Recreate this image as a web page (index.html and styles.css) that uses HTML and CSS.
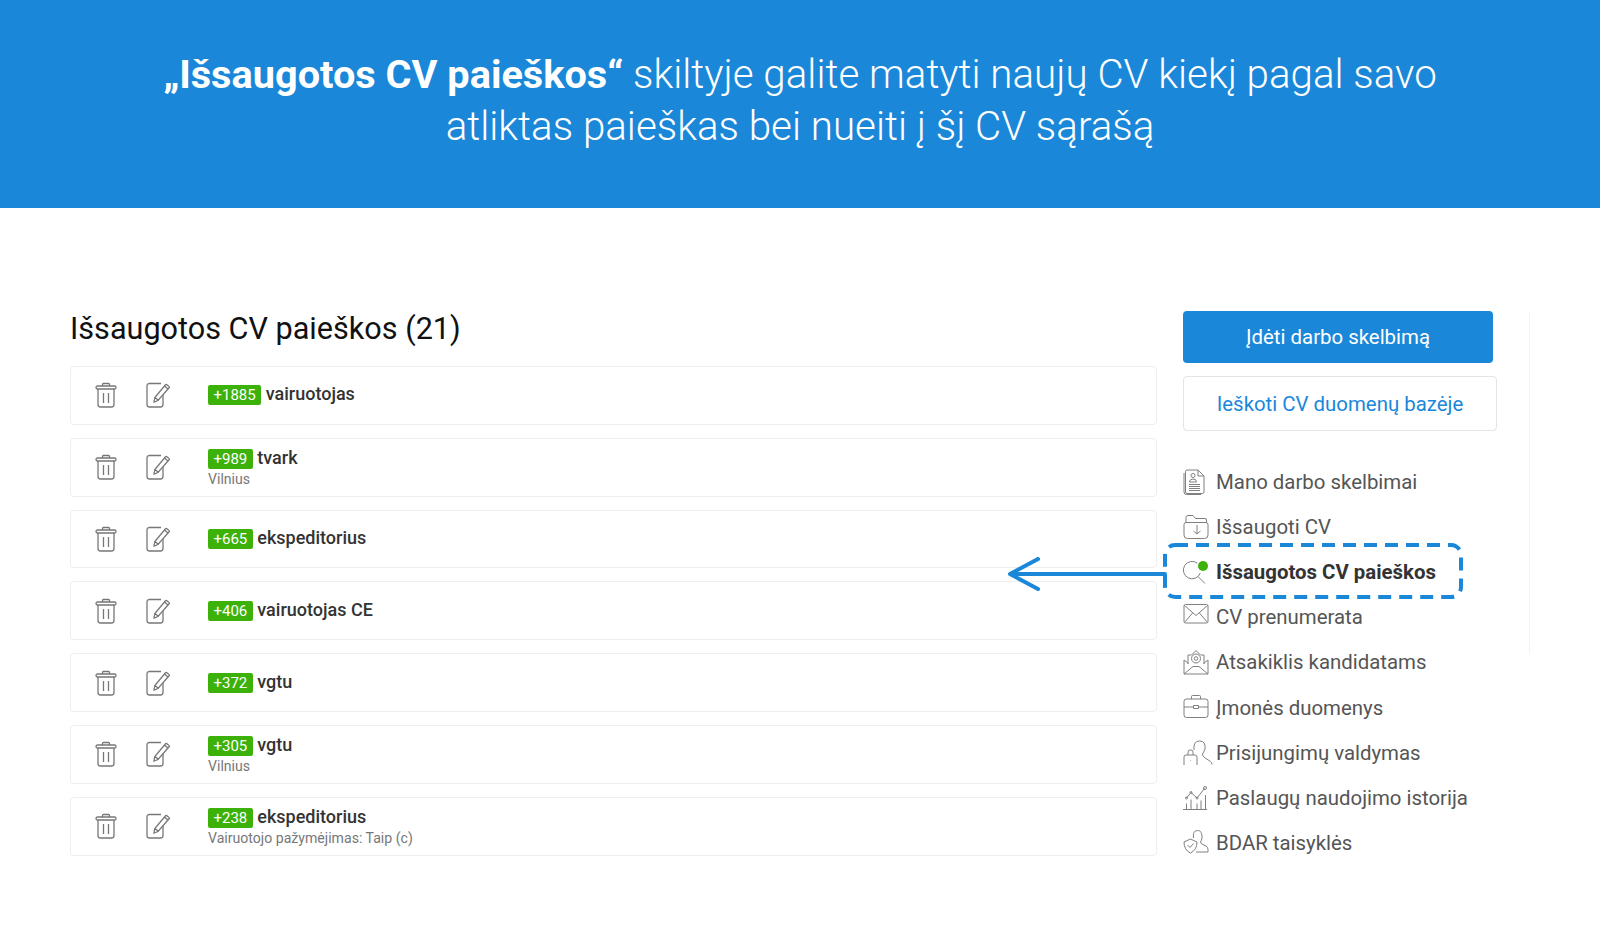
FILE: index.html
```html
<!DOCTYPE html>
<html lang="lt">

<head>
    <meta charset="UTF-8">
    <title>Išsaugotos CV paieškos</title>
    <link rel="stylesheet" href="styles.css">
</head>

<body>
    <svg class="icon-defs" width="0" height="0">
        <symbol id="i-trash" viewBox="0 0 22 26">
            <rect x="1" y="4" width="20" height="3" rx="1.500" />
            <path d="M7.500 4V2.500q0-1 1-1h5q1 0 1 1V4M3 7v15.500Q3 25 5.500 25h11q2.500 0 2.500-2.500V7M8.500 11v10M13.500 11v10" />
        </symbol>
        <symbol id="i-edit" viewBox="0 0 24 26">
            <path d="M15 1.500H3.500Q1 1.500 1 4v18.500Q1 25 3.500 25h11q2.500 0 2.500-2.500V13" />
            <path d="M8 20l.8-4.500L18.500 4l3.500 3L12 18.500zM9 15.500l3.500 3M18.500 4l1-1.200q.7-.7 1.500 0l2 1.800q.7.7 0 1.500L22 7" />
        </symbol>
    </svg>

    <header class="banner">
        <p class="banner-text"><b>„Išsaugotos CV paieškos“</b> skiltyje galite matyti naujų CV kiekį pagal savo<br>atliktas paieškas bei nueiti į šį CV sąrašą</p>
    </header>

    <main class="page">
        <section class="searches">
            <h1 class="searches-title">Išsaugotos CV paieškos (21)</h1>
            <div class="search-list">
                <div class="search-row">
                    <svg class="row-icon"><use href="#i-trash" /></svg>
                    <svg class="row-icon row-icon-edit"><use href="#i-edit" /></svg>
                    <div class="search-info">
                        <div class="search-name"><span class="count">+1885</span> vairuotojas</div>
                    </div>
                </div>
                <div class="search-row">
                    <svg class="row-icon"><use href="#i-trash" /></svg>
                    <svg class="row-icon row-icon-edit"><use href="#i-edit" /></svg>
                    <div class="search-info">
                        <div class="search-name"><span class="count">+989</span> tvark</div>
                        <div class="search-note">Vilnius</div>
                    </div>
                </div>
                <div class="search-row">
                    <svg class="row-icon"><use href="#i-trash" /></svg>
                    <svg class="row-icon row-icon-edit"><use href="#i-edit" /></svg>
                    <div class="search-info">
                        <div class="search-name"><span class="count">+665</span> ekspeditorius</div>
                    </div>
                </div>
                <div class="search-row">
                    <svg class="row-icon"><use href="#i-trash" /></svg>
                    <svg class="row-icon row-icon-edit"><use href="#i-edit" /></svg>
                    <div class="search-info">
                        <div class="search-name"><span class="count">+406</span> vairuotojas CE</div>
                    </div>
                </div>
                <div class="search-row">
                    <svg class="row-icon"><use href="#i-trash" /></svg>
                    <svg class="row-icon row-icon-edit"><use href="#i-edit" /></svg>
                    <div class="search-info">
                        <div class="search-name"><span class="count">+372</span> vgtu</div>
                    </div>
                </div>
                <div class="search-row">
                    <svg class="row-icon"><use href="#i-trash" /></svg>
                    <svg class="row-icon row-icon-edit"><use href="#i-edit" /></svg>
                    <div class="search-info">
                        <div class="search-name"><span class="count">+305</span> vgtu</div>
                        <div class="search-note">Vilnius</div>
                    </div>
                </div>
                <div class="search-row">
                    <svg class="row-icon"><use href="#i-trash" /></svg>
                    <svg class="row-icon row-icon-edit"><use href="#i-edit" /></svg>
                    <div class="search-info">
                        <div class="search-name"><span class="count">+238</span> ekspeditorius</div>
                        <div class="search-note">Vairuotojo pažymėjimas: Taip (c)</div>
                    </div>
                </div>
            </div>
        </section>

        <aside class="sidebar">
            <a class="btn btn-primary">Įdėti darbo skelbimą</a>
            <a class="btn btn-outline">Ieškoti CV duomenų bazėje</a>
            <nav class="side-menu">
                <a class="side-item">
                    <svg class="side-icon" viewBox="0 0 26 26"><path d="M4 1h11l6 6v16q0 1.500-1.500 1.500H4q-1.500 0-1.500-1.500V2.500Q2.500 1 4 1zM15 1v6h6M1 4v19q0 2.500 2.500 2.500H18" /><circle cx="10" cy="6.500" r="2" /><path d="M6.500 13q0-3 3.500-3t3.500 3zM6 15.500h11M6 17.500h11M6 19.500h11M6 21.500h11" /></svg>
                    Mano darbo skelbimai
                </a>
                <a class="side-item">
                    <svg class="side-icon" viewBox="0 0 26 26"><path d="M3 8.500V3.500q0-2 2-2h5l2.500 3H22q1.500 0 1.500 1.500v2.500" /><path d="M3 8.500h20q2 0 2 2V21q0 3.500-3.500 3.500h-17Q1 24.500 1 21V10.500q0-2 2-2z" /><path d="M14 11v9M10.500 17l3.500 3 3.500-3" /></svg>
                    Išsaugoti CV
                </a>
                <a class="side-item side-item-active">
                    <svg class="side-icon" viewBox="0 0 26 26"><path d="M14.500 4.300a8.700 8.700 0 1 0 2.800 9.700M15 17.500l7 7" /><circle class="side-dot" cx="20" cy="7" r="5" /></svg>
                    Išsaugotos CV paieškos
                </a>
                <a class="side-item">
                    <svg class="side-icon" viewBox="0 0 26 26"><rect x="1" y=".5" width="24" height="18.500" rx="1.500" /><path d="M1.500 1.500L13 11.500 24.500 1.500M1.500 18.500l8-9.500M24.500 18.500l-8-9.500" /></svg>
                    CV prenumerata
                </a>
                <a class="side-item">
                    <svg class="side-icon" viewBox="0 0 26 26"><path d="M1 11v14h24V11M1 25l9-7.500h6l9 7.500M1 11l4.500 3.500M25 11l-4.500 3.500M5 15V6h3.500L13 1.500 17.500 6H21v9" /><circle cx="13" cy="9.500" r="4.500" /><circle cx="13" cy="9.500" r="1.800" /></svg>
                    Atsakiklis kandidatams
                </a>
                <a class="side-item">
                    <svg class="side-icon" viewBox="0 0 26 26"><rect x="1" y="4" width="24" height="18.500" rx="2.500" /><path d="M8.500 4V1.500q0-1 1-1h7q1 0 1 1V4M1 12h9.500M15.500 12H25M10.500 10.500h5v3h-5z" /></svg>
                    Įmonės duomenys
                </a>
                <a class="side-item">
                    <svg class="side-icon" viewBox="0 0 26 26"><path d="M1 25v-8q0-2 2-2h9q2 0 2 2v8M5 15v-3q0-2 2-2h1q2 0 2 2v3M7.500 20v.5M11 10q-1-9 5.500-9T22 9q-1 3-2.500 5 0 2 2 3.500l6 4q1.500 1 1.500 3" /></svg>
                    Prisijungimų valdymas
                </a>
                <a class="side-item">
                    <svg class="side-icon" viewBox="0 0 26 26"><path d="M0 24.500h24M3.500 24.500v-6M8 24.500v-10M14 24.500v-6M18 24.500v-9M22.500 24.500V10M3.500 13L8 7.500l6 5.500 7.500-9.500" /><circle cx="3.500" cy="13" r="1" /><circle cx="8" cy="7.500" r="1" /><circle cx="14" cy="13" r="1" /><circle cx="22" cy="3" r="1.500" /></svg>
                    Paslaugų naudojimo istorija
                </a>
                <a class="side-item">
                    <svg class="side-icon" viewBox="0 0 26 26"><path d="M1 12l6.500-3 6.500 3q0 8-6.500 11Q1 20 1 12zM4.500 15L7 17.500l3.500-4" /><path d="M10.500 8q-1-7.500 4-7.500T19 8q-.5 2.500-1.500 4 0 1.500 2.500 2.500l3 1.500q2 1 2 3.500V22H13" /></svg>
                    BDAR taisyklės
                </a>
                <div class="callout">
                    <svg class="callout-box" viewBox="0 0 300 56"><rect x="2" y="2" width="296" height="52" rx="10" /></svg>
                    <svg class="callout-arrow" viewBox="0 0 160 34"><path d="M158 17H3M31 2L3 17l28 15" /></svg>
                </div>
            </nav>
        </aside>
    </main>
</body>

</html>
```

FILE: styles.css
```css
body {
    margin: 0;
    font-family: 'Roboto', sans-serif;
    background-color: #ffffff;
    color: #333333;
}

.icon-defs {
    position: absolute;
}

.banner {
    background-color: #1a87d9;
    height: 208px;
    display: flex;
    align-items: center;
    justify-content: center;
}

.banner-text {
    margin: 0;
    padding-bottom: 6px;
    color: #ffffff;
    font-size: 40.300px;
    font-weight: 300;
    line-height: 52px;
    text-align: center;
}

.banner-text b {
    font-size: 39.700px;
    font-weight: 700;
}

.page {
    display: flex;
    padding: 103px 0 0 70px;
}

.searches {
    width: 1087px;
}

.searches-title {
    margin: -1px 0 18px;
    color: #111111;
    font-size: 30.600px;
    font-weight: 400;
    line-height: 38px;
}

.search-list {
    display: flex;
    flex-direction: column;
    gap: 13px;
}

.search-row {
    display: flex;
    align-items: center;
    height: 58.800px;
    box-sizing: border-box;
    padding-left: 24px;
    border: 1px solid #eeeeee;
    border-radius: 4px;
}

.row-icon {
    width: 22px;
    height: 26px;
    flex: none;
    fill: none;
    stroke: #777777;
    stroke-width: 1.300;
}

.row-icon-edit {
    width: 24px;
    margin-left: 29px;
}

.search-info {
    margin-left: 38px;
    padding-bottom: 2px;
}

.search-name {
    font-size: 18px;
    font-weight: 500;
    line-height: 22px;
    color: #333333;
}

.count {
    display: inline-block;
    padding: 0 5.500px;
    background-color: #3cb10a;
    border-radius: 2px;
    color: #ffffff;
    font-size: 15px;
    font-weight: 400;
    line-height: 20px;
}

.search-note {
    margin: 1px 0 -3px;
    font-size: 14.100px;
    line-height: 19px;
    color: #777777;
}

.sidebar {
    width: 346px;
    height: 343px;
    margin-left: 26px;
    border-right: 1px solid #f4f4f4;
}

.btn {
    display: block;
    box-sizing: border-box;
    font-size: 20.400px;
    text-align: center;
}

.btn-primary {
    width: 310px;
    height: 52px;
    line-height: 52px;
    background-color: #1a87d9;
    border-radius: 4px;
    color: #ffffff;
}

.btn-outline {
    width: 314px;
    height: 55px;
    margin-top: 13px;
    line-height: 55px;
    background-color: #ffffff;
    border: 1px solid #e4e4e4;
    border-radius: 4px;
    color: #1a87d9;
}

.side-menu {
    position: relative;
    margin-top: 28px;
}

.side-item {
    display: flex;
    align-items: center;
    gap: 7px;
    height: 45.200px;
    font-size: 20.400px;
    color: #555555;
}

.side-item-active {
    font-weight: 700;
    color: #333333;
}

.side-icon {
    width: 26px;
    height: 26px;
    flex: none;
    overflow: visible;
    fill: none;
    stroke: #808080;
    stroke-width: 1;
}

.side-dot {
    fill: #3cb10a;
    stroke: none;
}

.callout {
    position: absolute;
    left: -20px;
    top: 84px;
    width: 300px;
    height: 56px;
}

.callout-box {
    display: block;
    width: 300px;
    height: 56px;
    fill: none;
    stroke: #1a87d9;
    stroke-width: 4;
    stroke-dasharray: 13 8;
}

.callout-arrow {
    position: absolute;
    right: 296px;
    top: 14px;
    width: 160px;
    height: 34px;
    fill: none;
    stroke: #1a87d9;
    stroke-width: 4;
    stroke-linecap: round;
    stroke-linejoin: round;
}
```
